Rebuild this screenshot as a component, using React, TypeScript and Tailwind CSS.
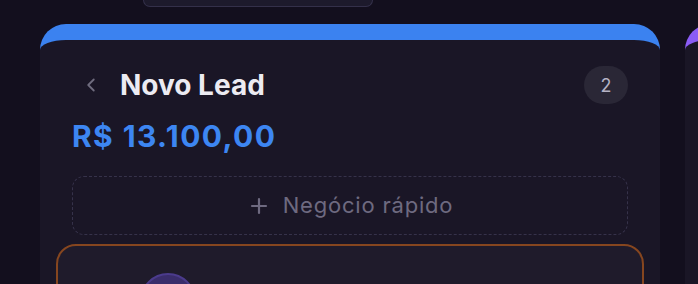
import React from 'react';
import { FiChevronLeft, FiPlus } from 'react-icons/fi';

const App: React.FC = () => {
  return (
    <div
      className="w-[698px] h-[284px] overflow-hidden bg-[#130f1e]"
      style={{ fontFamily: 'Inter, "Open Sans", sans-serif' }}
    >
      <div className="h-[24px] pl-[143px]">
        <div className="w-[230px] h-[7px] rounded-b-[10px] border-x border-b border-[#34304a] bg-[#1d1a2c]" />
      </div>
      <div className="flex pl-[40px] gap-[25px]">
        <div className="w-[620px] h-[300px] shrink-0 rounded-t-[26px] border-t-[16px] border-[#3b82f0] bg-[#1a1626]">
          <div className="px-[32px] pt-[26px]">
            <div className="flex items-center justify-between h-[38px]">
              <div className="flex items-center">
                <FiChevronLeft className="text-[#6f6c7e] w-[22px] h-[22px] ml-[8px]" />
                <span className="ml-[18px] text-[28px] font-bold tracking-[0px] text-[#ecebf2]">
                  Novo Lead
                </span>
              </div>
              <div className="w-[44px] h-[38px] rounded-full bg-[#2a2736] flex items-center justify-center text-[18px] text-[#b5b2c4]">
                2
              </div>
            </div>
            <div className="mt-[12px] text-[30px] leading-[40px] font-bold tracking-[1.4px] text-[#3d86f2]">
              R$ 13.100,00
            </div>
            <div className="mt-[20px] h-[59px] rounded-[12px] border-[1.5px] border-dashed border-[#36324a] flex items-center justify-center gap-[12px] text-[#6e6a80]">
              <FiPlus className="w-[24px] h-[24px]" strokeWidth={2.2} />
              <span className="text-[22px] tracking-[0.8px]">Negócio rápido</span>
            </div>
          </div>
          <div className="px-[16px] mt-[9px]">
            <div className="h-[60px] rounded-[20px] border-[2px] border-[#86461f] bg-[#1f1b2b] pl-[82px] pt-[27px]">
              <div className="w-[56px] h-[56px] rounded-full bg-[#3a2d6b] border-[2px] border-[#4b3b8c]" />
            </div>
          </div>
        </div>
        <div className="w-[200px] h-[300px] shrink-0 rounded-t-[26px] border-t-[16px] border-[#8b5cf6] bg-[#1a1626]" />
      </div>
    </div>
  );
};

export default App;
